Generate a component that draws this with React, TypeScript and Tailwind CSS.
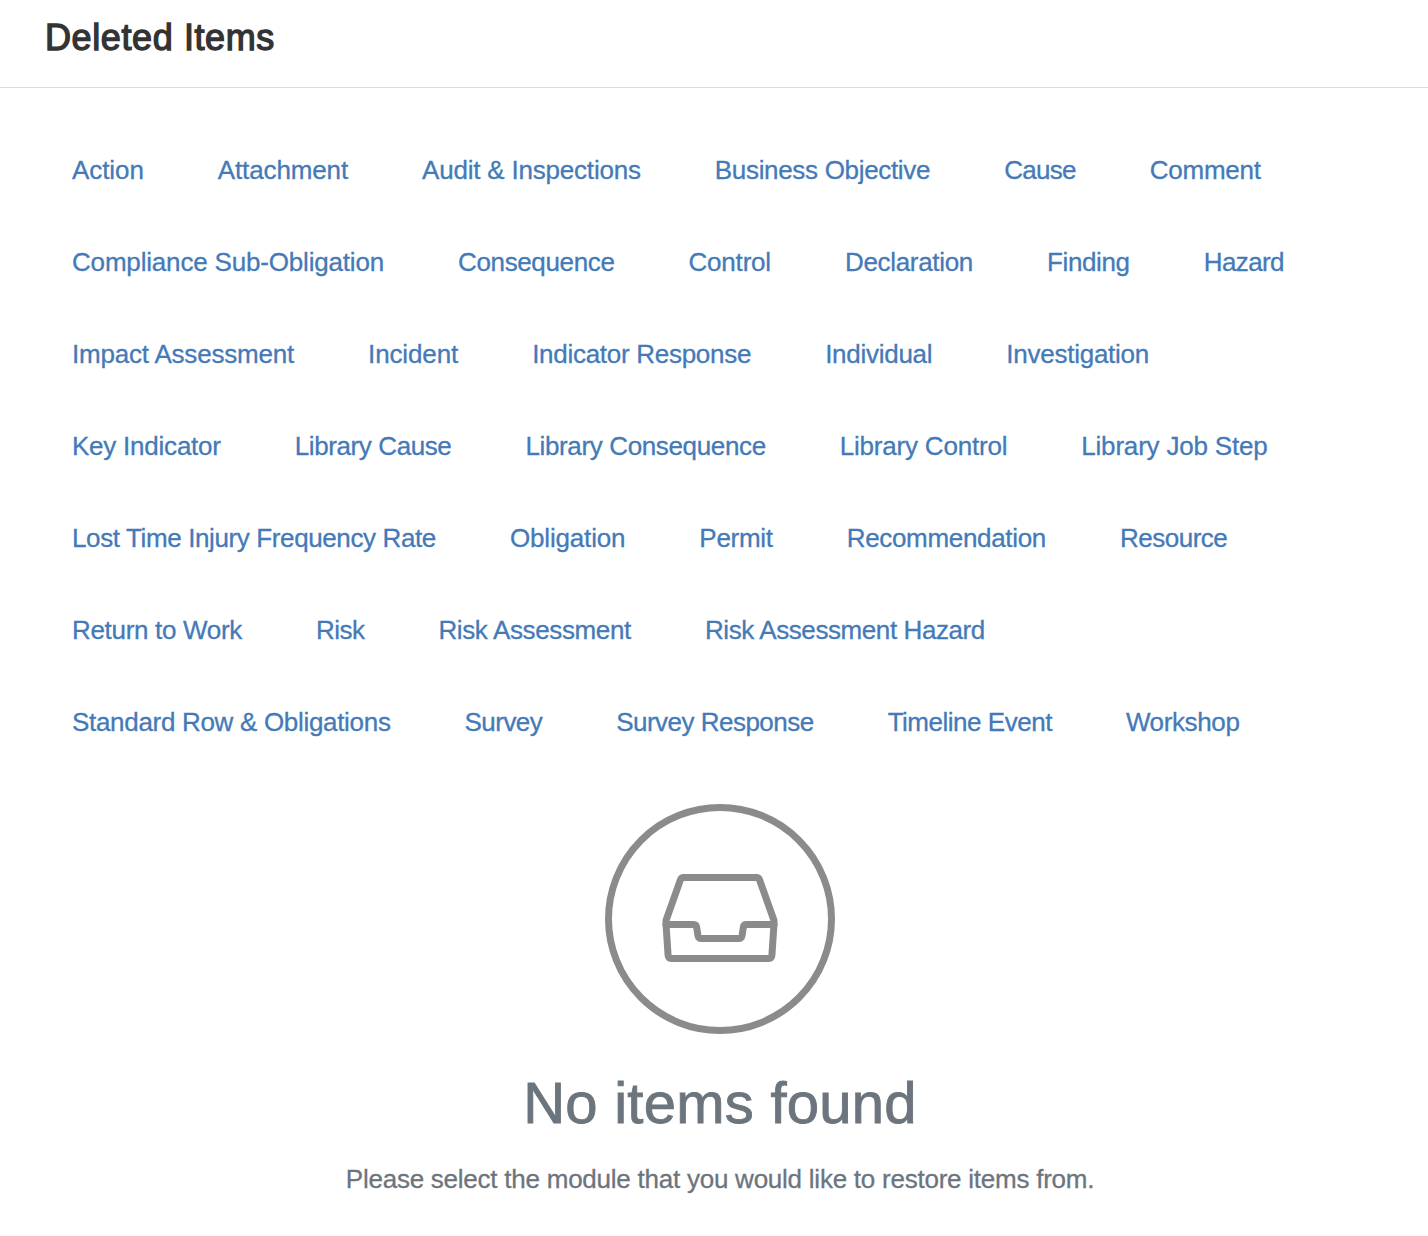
import React from "react";

interface Module {
  name: string;
  tracking: number;
}

// tracking is in pixels
const moduleRows: Module[][] = [
  [
    { name: "Action", tracking: -0.08 },
    { name: "Attachment", tracking: -0.13 },
    { name: "Audit & Inspections", tracking: -0.2 },
    { name: "Business Objective", tracking: -0.32 },
    { name: "Cause", tracking: -0.7 },
    { name: "Comment", tracking: -0.25 },
  ],
  [
    { name: "Compliance Sub-Obligation", tracking: -0.18 },
    { name: "Consequence", tracking: -0.36 },
    { name: "Control", tracking: -0.2 },
    { name: "Declaration", tracking: -0.32 },
    { name: "Finding", tracking: -0.36 },
    { name: "Hazard", tracking: -0.6 },
  ],
  [
    { name: "Impact Assessment", tracking: -0.2 },
    { name: "Incident", tracking: -0.12 },
    { name: "Indicator Response", tracking: -0.28 },
    { name: "Individual", tracking: -0.27 },
    { name: "Investigation", tracking: -0.25 },
  ],
  [
    { name: "Key Indicator", tracking: -0.23 },
    { name: "Library Cause", tracking: -0.4 },
    { name: "Library Consequence", tracking: -0.36 },
    { name: "Library Control", tracking: -0.2 },
    { name: "Library Job Step", tracking: -0.19 },
  ],
  [
    { name: "Lost Time Injury Frequency Rate", tracking: -0.38 },
    { name: "Obligation", tracking: -0.17 },
    { name: "Permit", tracking: -0.3 },
    { name: "Recommendation", tracking: -0.32 },
    { name: "Resource", tracking: -0.5 },
  ],
  [
    { name: "Return to Work", tracking: -0.31 },
    { name: "Risk", tracking: -0.55 },
    { name: "Risk Assessment", tracking: -0.36 },
    { name: "Risk Assessment Hazard", tracking: -0.41 },
  ],
  [
    { name: "Standard Row & Obligations", tracking: -0.31 },
    { name: "Survey", tracking: -0.55 },
    { name: "Survey Response", tracking: -0.52 },
    { name: "Timeline Event", tracking: -0.48 },
    { name: "Workshop", tracking: -0.37 },
  ],
];

function InboxIcon() {
  return (
    <svg
      className="w-[230px] h-[230px]"
      viewBox="0 0 230 230"
      fill="none"
      stroke="#8b8b8b"
      strokeWidth="7"
      strokeLinecap="round"
      strokeLinejoin="round"
    >
      <circle cx="115" cy="115" r="111.5" />
      <path d="M78.500 73.500H151.500Q153.700 73.500 154.500 75.700L169 116.500V120L166.900 151.500Q166.600 154.500 163.800 154.500H66.200Q63.400 154.500 63.100 151.500L61 120V116.500L75.500 75.700Q76.300 73.500 78.500 73.500Z" />
      <path d="M61 120.500H88.500Q91.300 120.500 91.700 123.500L92.900 131.300Q93.500 134.500 96.500 134.500H133.500Q136.500 134.500 137.100 131.300L138.300 123.500Q138.700 120.500 141.500 120.500H169" />
    </svg>
  );
}

export default function App() {
  return (
    <div className="h-[1236px] bg-white font-['Liberation_Sans',Arial,sans-serif]">
      {/* Header */}
      <header className="h-[88px] border-b border-[#dddddd] pl-[45px] pt-[17px]">
        <h1 className="text-[36px] leading-[42px] tracking-[0.6px] text-[#333333] [-webkit-text-stroke:1.3px_#333333]">
          Deleted Items
        </h1>
      </header>

      {/* Modules */}
      <nav className="pt-9 pl-[35px] text-[26px] leading-[36px] text-[#447ab7] [-webkit-text-stroke:0.3px_#447ab7]">
        {moduleRows.map((row) => (
          <div key={row[0].name} className="flex h-[92px] items-center">
            {row.map(({ name, tracking }) => (
              <a
                key={name}
                href="#"
                className="px-[37px] whitespace-nowrap"
                style={{ letterSpacing: `${tracking}px` }}
              >
                {name}
              </a>
            ))}
          </div>
        ))}
      </nav>

      {/* Empty state */}
      <div className="flex flex-col items-center pl-3 pt-9 text-[#6c757d]">
        <InboxIcon />
        <h2 className="mt-[34px] text-[58px] leading-[70px] tracking-[0.25px] [-webkit-text-stroke:0.9px_#6c757d]">
          No items found
        </h2>
        <p className="mt-[23px] text-[26px] leading-[36px] tracking-[-0.24px] [-webkit-text-stroke:0.3px_#6c757d]">
          Please select the module that you would like to restore items from.
        </p>
      </div>
    </div>
  );
}
